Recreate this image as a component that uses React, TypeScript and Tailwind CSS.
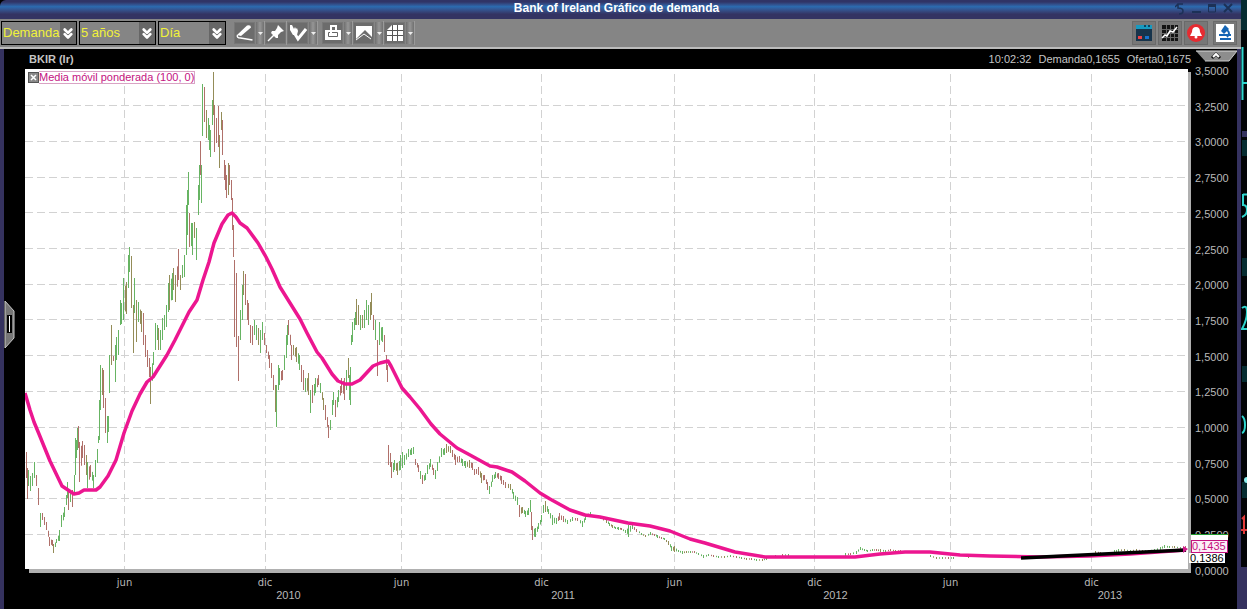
import { useState } from "react";
import { ChevronsDown } from "lucide-react";

type Tone = "g" | "r" | "o";
type Bar = [x: number, high: number, low: number, tone: Tone];

const TONES: Record<Tone, string> = { g: "#67b463", r: "#b0706a", o: "#948c58" };

const BARS: Bar[] = [
  [26, 452, 478, "r"], [27, 468, 499, "r"], [28, 470, 486, "g"], [30, 476, 491, "g"], [32, 473, 486, "g"], [34, 462, 478, "g"],
  [36, 475, 486, "r"], [38, 488, 505, "r"], [40, 513, 527, "g"], [42, 513, 520, "r"], [44, 517, 525, "r"], [46, 522, 530, "r"],
  [49, 537, 546, "r"], [52, 540, 546, "r"], [53, 544, 553, "o"], [56, 539, 543, "g"], [59, 530, 541, "g"], [61, 515, 527, "g"],
  [64, 507, 517, "g"], [66, 495, 505, "g"], [67, 482, 498, "g"], [68, 492, 510, "r"], [70, 490, 502, "g"], [72, 490, 507, "r"],
  [74, 475, 495, "g"], [75, 438, 475, "g"], [76, 440, 458, "g"], [77, 428, 450, "g"], [78, 426, 448, "r"], [79, 442, 482, "r"],
  [82, 441, 458, "r"], [84, 445, 465, "r"], [86, 455, 475, "o"], [87, 462, 488, "g"], [90, 465, 477, "r"], [93, 475, 488, "g"],
  [95, 460, 477, "g"], [97, 449, 463, "g"], [98, 436, 443, "g"], [99, 400, 440, "g"], [100, 365, 410, "g"], [102, 368, 395, "o"],
  [103, 370, 408, "r"], [105, 398, 433, "r"], [107, 416, 443, "g"], [108, 416, 432, "g"], [109, 355, 393, "g"], [111, 325, 365, "o"],
  [113, 356, 361, "r"], [115, 345, 382, "g"], [116, 337, 360, "g"], [118, 330, 355, "g"], [120, 300, 325, "g"], [121, 303, 324, "g"],
  [123, 278, 320, "g"], [126, 282, 314, "o"], [128, 255, 288, "g"], [129, 247, 272, "g"], [131, 256, 308, "o"], [133, 305, 353, "o"],
  [134, 278, 313, "g"], [136, 300, 342, "o"], [138, 302, 322, "g"], [141, 311, 332, "o"], [143, 313, 345, "r"], [145, 335, 357, "r"],
  [147, 350, 367, "r"], [149, 358, 377, "r"], [150, 367, 404, "o"], [153, 352, 365, "g"], [155, 323, 350, "g"], [157, 325, 340, "g"],
  [158, 328, 350, "o"], [160, 330, 350, "g"], [162, 318, 340, "g"], [164, 315, 330, "g"], [166, 305, 327, "g"], [168, 283, 312, "g"],
  [169, 275, 310, "o"], [172, 273, 300, "g"], [173, 268, 290, "o"], [175, 275, 302, "o"], [178, 249, 280, "r"], [180, 275, 290, "o"],
  [182, 265, 278, "g"], [184, 255, 277, "g"], [186, 205, 255, "g"], [187, 190, 235, "g"], [188, 172, 205, "g"], [189, 213, 247, "r"],
  [192, 223, 255, "g"], [194, 222, 238, "o"], [196, 228, 260, "g"], [198, 185, 215, "g"], [199, 165, 200, "g"], [200, 141, 175, "r"],
  [201, 165, 203, "g"], [202, 84, 136, "g"], [204, 87, 122, "r"], [206, 110, 138, "o"], [208, 118, 140, "g"], [209, 125, 150, "g"],
  [210, 130, 157, "g"], [212, 100, 125, "g"], [213, 72, 115, "o"], [214, 105, 152, "r"], [216, 118, 143, "r"], [218, 106, 147, "r"],
  [219, 135, 168, "o"], [221, 112, 130, "o"], [222, 120, 155, "r"], [224, 160, 180, "r"], [225, 165, 190, "r"], [226, 175, 198, "r"],
  [228, 163, 195, "o"], [229, 165, 185, "r"], [231, 180, 200, "r"], [232, 198, 230, "r"], [233, 225, 257, "r"], [234, 260, 337, "r"],
  [236, 273, 347, "r"], [238, 336, 381, "r"], [240, 310, 340, "g"], [242, 285, 320, "g"], [243, 271, 295, "o"], [245, 274, 305, "r"],
  [247, 300, 320, "r"], [248, 303, 325, "r"], [250, 325, 343, "r"], [252, 326, 345, "r"], [254, 320, 335, "g"], [256, 325, 340, "g"],
  [258, 328, 345, "o"], [260, 330, 353, "g"], [262, 322, 340, "g"], [264, 333, 345, "r"], [266, 345, 353, "r"], [269, 355, 368, "r"],
  [271, 363, 378, "r"], [273, 375, 390, "r"], [275, 385, 412, "o"], [276, 385, 427, "g"], [278, 365, 390, "g"], [279, 368, 385, "g"],
  [282, 370, 380, "r"], [284, 355, 370, "g"], [286, 335, 358, "g"], [287, 325, 345, "g"], [288, 320, 335, "r"], [291, 345, 360, "r"],
  [293, 345, 355, "o"], [296, 347, 362, "o"], [299, 355, 370, "g"], [301, 365, 382, "r"], [303, 370, 390, "r"], [305, 378, 392, "g"],
  [308, 373, 395, "o"], [310, 390, 413, "g"], [312, 385, 403, "r"], [315, 378, 393, "g"], [318, 375, 385, "r"], [320, 383, 393, "g"],
  [323, 398, 410, "o"], [325, 405, 420, "r"], [328, 425, 438, "r"], [330, 420, 430, "g"], [332, 400, 415, "g"], [333, 392, 405, "g"],
  [335, 400, 417, "r"], [338, 390, 402, "g"], [341, 378, 393, "r"], [344, 378, 400, "r"], [346, 370, 390, "g"], [348, 358, 378, "o"],
  [349, 375, 400, "g"], [350, 367, 405, "g"], [351, 335, 345, "g"], [352, 322, 342, "g"], [354, 318, 330, "g"], [355, 312, 325, "g"],
  [356, 299, 325, "o"], [358, 305, 325, "o"], [360, 315, 330, "g"], [362, 315, 328, "o"], [364, 310, 328, "g"], [366, 300, 320, "g"],
  [368, 305, 325, "g"], [370, 302, 320, "o"], [371, 293, 315, "o"], [373, 315, 330, "r"], [375, 320, 340, "g"], [377, 340, 376, "r"],
  [379, 322, 345, "g"], [382, 327, 342, "g"], [384, 335, 352, "r"], [386, 355, 370, "r"], [387, 365, 382, "r"],
];

// after the gap, thinner range
const TAIL: Bar[] = [
  [388, 445, 465, "r"], [390, 453, 467, "r"], [391, 462, 478, "r"], [394, 460, 470, "g"], [397, 463, 475, "o"], [400, 455, 470, "g"],
  [402, 452, 468, "g"], [404, 455, 465, "g"], [408, 449, 457, "g"], [411, 448, 455, "g"], [413, 447, 454, "g"], [415, 459, 465, "r"],
  [418, 465, 472, "r"], [420, 471, 479, "g"], [422, 475, 484, "r"], [425, 473, 480, "g"], [427, 465, 474, "g"], [430, 459, 467, "g"],
  [433, 468, 475, "r"], [435, 470, 479, "g"], [437, 462, 471, "g"], [441, 448, 457, "g"], [444, 448, 455, "g"], [446, 444, 453, "o"],
  [450, 446, 453, "o"], [452, 450, 457, "r"], [455, 455, 465, "r"], [459, 456, 462, "r"], [462, 459, 466, "g"], [465, 461, 468, "g"],
  [469, 460, 468, "o"], [472, 463, 470, "r"], [474, 469, 475, "r"], [478, 467, 475, "r"], [481, 473, 483, "o"], [484, 475, 480, "r"],
  [487, 482, 490, "r"], [489, 486, 494, "g"], [492, 475, 482, "g"], [495, 472, 478, "g"], [498, 473, 479, "r"], [501, 476, 484, "r"],
  [505, 482, 488, "r"], [510, 484, 490, "o"], [513, 492, 499, "g"], [517, 497, 505, "g"], [519, 505, 517, "r"], [522, 507, 513, "o"],
  [525, 511, 517, "g"], [528, 508, 515, "g"], [530, 500, 512, "g"], [531, 512, 530, "r"], [532, 526, 540, "r"], [535, 528, 537, "g"],
  [538, 523, 529, "g"], [541, 515, 522, "g"], [543, 505, 513, "g"], [545, 501, 512, "o"], [548, 509, 514, "g"], [552, 515, 525, "g"],
  [556, 518, 524, "g"], [559, 513, 520, "r"], [563, 516, 522, "r"], [567, 520, 524, "g"], [572, 517, 521, "g"], [577, 518, 521, "r"],
  [582, 521, 527, "g"], [585, 514, 520, "g"], [590, 512, 515, "g"], [600, 516, 519, "g"], [606, 519, 523, "o"], [609, 523, 526, "g"],
  [612, 525, 528, "o"], [615, 527, 529, "g"], [618, 527, 530, "g"], [621, 528, 530, "r"], [625, 530, 533, "g"], [628, 525, 537, "g"],
  [632, 524, 529, "g"], [636, 529, 532, "r"], [641, 533, 535, "g"], [645, 535, 537, "o"], [650, 532, 535, "g"], [654, 534, 536, "r"],
  [657, 535, 538, "g"], [661, 537, 539, "r"], [664, 538, 540, "g"], [668, 541, 545, "o"], [671, 546, 551, "g"], [674, 546, 552, "o"],
  [678, 550, 552, "g"], [682, 551, 554, "g"], [686, 551, 553, "o"], [690, 551, 553, "g"], [694, 551, 553, "r"], [698, 553, 555, "g"],
  [703, 555, 558, "g"], [708, 554, 556, "g"], [713, 555, 557, "r"], [718, 556, 558, "g"], [724, 556, 558, "o"], [730, 555, 557, "g"],
  [736, 556, 558, "r"], [741, 557, 559, "g"], [746, 558, 560, "o"], [751, 558, 560, "r"], [756, 559, 561, "g"], [762, 559, 561, "o"],
  [766, 558, 560, "g"], [775, 555, 557, "g"], [782, 554, 556, "r"], [788, 554, 556, "g"], [845, 553, 556, "g"], [850, 553, 555, "r"],
  [856, 551, 554, "g"], [860, 547, 550, "g"], [864, 549, 551, "g"], [867, 550, 552, "g"], [872, 549, 551, "g"], [876, 549, 551, "r"],
  [880, 549, 552, "o"], [885, 550, 552, "g"], [890, 549, 551, "r"], [895, 550, 552, "o"], [900, 550, 552, "r"], [930, 555, 557, "g"],
  [936, 557, 559, "o"], [942, 557, 559, "g"], [948, 557, 559, "r"], [953, 557, 559, "g"], [968, 556, 558, "o"], [1095, 551, 553, "o"],
  [1100, 552, 554, "r"], [1114, 550, 553, "g"], [1118, 549, 552, "g"], [1124, 549, 551, "o"], [1130, 550, 552, "g"], [1136, 549, 551, "o"],
  [1142, 550, 552, "r"], [1148, 550, 552, "o"], [1154, 549, 551, "g"], [1160, 547, 550, "g"], [1164, 545, 548, "g"], [1169, 546, 548, "g"],
  [1174, 546, 548, "o"], [1180, 547, 549, "g"], [1185, 546, 549, "r"],
];

// adds one shorter session between close neighbours
function fill(bars: Bar[]): Bar[] {
  return bars.flatMap((b, i) => {
    const n = bars[i + 1];
    if (!n || n[0] - b[0] < 3 || n[0] - b[0] > 6) return [b];
    const hi = (b[1] + n[1]) / 2;
    const lo = (b[2] + n[2]) / 2;
    const pad = (lo - hi) * 0.15;
    return [b, [b[0] + Math.ceil((n[0] - b[0]) / 2), hi + pad, lo - pad, n[3]] as Bar];
  });
}

const SESSIONS = [...fill(BARS), ...fill(TAIL)];

function barPath(tone: Tone) {
  return SESSIONS.filter((b) => b[3] === tone)
    .map(([x, hi, lo]) => `M${x + 0.5} ${hi}V${lo}`)
    .join("");
}

const AVERAGE =
  "25,393 30,410 34,422 39,434 50,461 62,486 68,490 74,494 79,493 84,490 96,490 100,487 108,476 116,460 124,433 132,411 140,394 147,382 153,377 167,355 175,340 185,320 189,312 197,300 203,280 209,262 214,243 222,224 228,215 232,213 236,217 240,223 247,228 258,243 266,257 272,269 280,287 290,303 300,319 307,333 317,352 322,358 332,374 338,381 345,384 352,384 360,380 373,366 380,363 388,361 391,366 402,388 410,397 420,409 431,424 440,434 457,448 470,455 490,466 497,467 512,472 525,481 540,493 550,499 570,510 585,515 600,517 628,523 650,526 670,531 690,539 705,543 735,552 765,557 855,557 880,554 905,552 930,552 960,555 990,556 1040,557 1090,556 1130,554 1186,550";

const H_LINES = [105, 141, 177, 212, 248, 284, 319, 355, 391, 427, 462, 498, 534];
const V_LINES = [124, 265, 401, 541, 674, 814, 950, 1091];

const PRICES = [
  "3,5000", "3,2500", "3,0000", "2,7500", "2,5000", "2,2500", "2,0000", "1,7500",
  "1,5000", "1,2500", "1,0000", "0,7500", "0,5000", "0,2500", "0,0000",
];
const MONTHS = ["jun", "dic", "jun", "dic", "jun", "dic", "jun", "dic"];
const YEARS = ["2010", "2011", "2012", "2013"];

function Picker({ label, options, width }: { label: string; options: string[]; width: string }) {
  const [value, setValue] = useState(options[0]);
  return (
    <div className={`relative h-6 border border-black bg-[#858585] ${width}`}>
      <select
        aria-label={label}
        value={value}
        onChange={(e) => setValue(e.target.value)}
        className="block h-full w-full appearance-none pl-px text-[13px] leading-5 text-[#f2f23a] outline-none"
      >
        {options.map((o) => (
          <option key={o}>{o}</option>
        ))}
      </select>
      <span className="pointer-events-none absolute inset-y-0 right-0 flex w-4 items-center justify-center bg-[#666]">
        <ChevronsDown size={17} strokeWidth={4} color="#fff" />
      </span>
    </div>
  );
}

function Tool({ label, menu = true, children }: { label: string; menu?: boolean; children: React.ReactNode }) {
  return (
    <div className="flex h-6 items-center gap-px border-r border-[#9a9a9a]">
      <button aria-label={label} className="flex h-[22px] w-[21px] items-center justify-center border border-[#777] bg-[#6c6c6c]">
        <svg width="18" height="18" viewBox="0 0 18 18">{children}</svg>
      </button>
      {menu && (
        <button aria-label={`${label}: opciones`} className="flex h-[22px] w-2 items-center justify-center bg-linear-to-r from-[#707070] via-[#969696] to-[#707070]">
          <svg width="5" height="3" viewBox="0 0 5 3"><path d="M0 0h5L2.5 3z" fill="#eee" /></svg>
        </button>
      )}
    </div>
  );
}

function PanelButton({ label, children }: { label: string; children: React.ReactNode }) {
  return (
    <button aria-label={label} className="flex size-6 items-center justify-center border border-[#6a6a6a] bg-[#777]">
      <svg width="18" height="18" viewBox="0 0 18 18">{children}</svg>
    </button>
  );
}

function TitleBar() {
  return (
    <header className="flex h-[19px] shrink-0 items-start rounded-tl-md bg-linear-to-b from-[#303466] from-10% via-[#2b6bb0] via-35% to-[#333362] to-75%">
      <div className="w-14" />
      <h1 className="flex-1 text-center text-[12px] leading-4 font-bold text-white">Bank of Ireland Gráfico de demanda</h1>
      <div className="flex w-16 justify-end gap-1.5 pt-[3px] pr-2">
        <button aria-label="Desacoplar">
          <svg width="10" height="12" viewBox="0 0 10 12"><path d="M8 1H3v4q5 0 5 3T4 11M3 1L0 4" fill="none" stroke="#1c3157" strokeWidth="1.5" /></svg>
        </button>
        <button aria-label="Minimizar">
          <svg width="10" height="12" viewBox="0 0 10 12"><path d="M1 9h9" stroke="#1c3157" strokeWidth="2" /></svg>
        </button>
        <button aria-label="Maximizar">
          <svg width="10" height="12" viewBox="0 0 10 12"><path d="M1 1h8v3H1z" fill="#1c3157" /><path d="M1.500 2v7h7V2" fill="none" stroke="#1c3157" /></svg>
        </button>
        <button aria-label="Cerrar">
          <svg width="10" height="12" viewBox="0 0 10 12"><path d="M1 1l8 8M9 1l-8 8" stroke="#1c3157" strokeWidth="2" /></svg>
        </button>
      </div>
    </header>
  );
}

function Toolbar() {
  return (
    <div className="flex h-[30px] shrink-0 items-center justify-between border-b-2 border-[#bcbcbc] bg-[#858585] pr-1 pl-px">
      <div className="flex items-center gap-[2px]">
        <Picker label="Precio" options={["Demanda", "Oferta"]} width="w-[76px]" />
        <Picker label="Periodo" options={["5 años", "1 año"]} width="w-[77px]" />
        <Picker label="Intervalo" options={["Día", "Semana"]} width="w-[68px]" />
        <div className="ml-1.5 flex items-center">
          <Tool label="Dibujar">
            <path d="M1 11L11 1.500q4-1 4 2L5 12z" fill="#fff" />
            <path d="M1.500 11q-1 3 3 3l12 2" fill="none" stroke="#fff" strokeWidth="1.5" />
          </Tool>
          <Tool label="Fijar" menu={false}>
            <path d="M11 1l6 6-3 1-3 3 0 3-2 0-5-5 1-2 3 0 2-3z" fill="#fff" />
            <path d="M7 11l-6 6" stroke="#fff" strokeWidth="1.5" />
          </Tool>
          <Tool label="Seleccionar">
            <path d="M1 1l2 0 2 4 1-2 1 2 1-1 1 3-1 4-4 0-3-5z" fill="#fff" />
            <path d="M6 10l3 5 8-10" fill="none" stroke="#fff" strokeWidth="3" />
          </Tool>
          <div className="w-1" />
          <Tool label="Herramientas">
            <path d="M1 6h16v10H1z" fill="#fff" />
            <path d="M7 6V2h5v4" fill="none" stroke="#fff" strokeWidth="2" />
            <path d="M6 8.500h-1.500v4h9v-4H8" fill="none" stroke="#666" />
          </Tool>
          <Tool label="Tipo de gráfico">
            <path d="M1 2h16v11l-7-7-9 9z" fill="#fff" />
            <path d="M1 16l8-6 7 5" fill="none" stroke="#fff" />
          </Tool>
          <Tool label="Cuadrícula">
            <path d="M6 1h11v16H1V6z" fill="#fff" />
            <path d="M1 6.500h16M1 11.500h16M6.500 1v16M11.500 1v16" stroke="#555" />
          </Tool>
        </div>
      </div>
      <div className="flex items-center gap-[2px]">
        <PanelButton label="Panel">
          <path d="M1 1h16v16H1z" fill="#17344c" />
          <path d="M1 1h16v4H1z" fill="#189ac0" />
          <path d="M9 2h2M13 2h2" stroke="#0a4463" strokeWidth="2" />
          <path d="M3 12h4v3H3z" fill="#ee4145" />
          <path d="M10 12h4v3h-4z" fill="#1673cf" />
        </PanelButton>
        <PanelButton label="Gráfico">
          <path d="M1 1h16v16H1z" fill="#141414" />
          <path d="M1 5.500h16M1 9.500h16M1 13.500h16M5.500 1v16M9.500 1v16M13.500 1v16" stroke="#666" />
          <path d="M1 14l3-3 2 1 3-5 3 1 4-5" fill="none" stroke="#fff" strokeWidth="1.5" />
        </PanelButton>
        <PanelButton label="Alertas">
          <circle cx="9" cy="9" r="9" fill="#e52b31" />
          <path d="M9 3q4 0 4 5l2 4H3l2-4q0-5 4-5z" fill="#fff" />
          <circle cx="9" cy="13" r="1.500" fill="#fff" />
        </PanelButton>
        <div className="w-px" />
        <PanelButton label="Análisis">
          <path d="M0 0h18v18H0z" fill="#fff" />
          <path d="M9 1l4 4-5 5-3-3z" fill="#1565b5" />
          <path d="M3 11h12M11 6q4 3 0 7M4 15h11" fill="none" stroke="#1565b5" strokeWidth="2" />
        </PanelButton>
      </div>
    </div>
  );
}

function Plot() {
  const [average, setAverage] = useState(true);
  return (
    <div className="relative flex min-h-0 flex-1 bg-white">
      <svg className="h-full w-full" viewBox="25 69 1163 500" preserveAspectRatio="none">
        <g stroke="#d2d2d2" strokeDasharray="8 4">
          {H_LINES.map((y) => <path key={y} d={`M25 ${y + 0.5}H1188`} />)}
          {V_LINES.map((x) => <path key={x} d={`M${x + 0.5} 74V569`} />)}
        </g>
        {(["g", "r", "o"] as const).map((t) => (
          <path key={t} d={barPath(t)} stroke={TONES[t]} />
        ))}
        {average && <polyline points={AVERAGE} fill="none" stroke="#ec1690" strokeWidth="3.500" strokeLinejoin="round" />}
        <path d="M1021 558L1186 550" stroke="#000" strokeWidth="3.500" />
        <path d="M1183 546l5 3-5 4z" fill="#d0188a" />
      </svg>
      <div className="absolute top-[2px] left-[3px] flex h-[13px] items-center">
        <button aria-label="Quitar media" onClick={() => setAverage(!average)} className="flex size-[11px] items-center justify-center border border-[#555] bg-[#888]">
          <svg width="7" height="7" viewBox="0 0 7 7"><path d="M1 1l5 5M6 1L1 6" stroke="#fff" strokeWidth="1.500" /></svg>
        </button>
        <span className="border border-l-0 border-[#d9a3c4] text-[11px] leading-[11px] whitespace-nowrap text-[#c4127f]">
          Media móvil ponderada (100, 0)
        </span>
      </div>
    </div>
  );
}

function PriceAxis() {
  return (
    <div className="flex w-[46px] shrink-0 flex-col pb-8">
      <button aria-label="Contraer" className="h-4 pl-[5px]">
        <svg className="block" width="41" height="16" viewBox="0 0 41 16">
          <path d="M0 2h41l-8 10H9z" fill="#8d8d8d" />
          <path d="M0 2h41" stroke="#ddd" />
          <path d="M9 12h24l8-10" fill="none" stroke="#c8c8c8" />
          <path d="M16 9l4-4 4 4" fill="none" stroke="#111" strokeWidth="3" />
          <path d="M17 8l3-3 3 3" fill="none" stroke="#fff" strokeWidth="2" />
        </svg>
      </button>
      <div className="relative flex flex-1 flex-col justify-between pl-1 text-[11px] leading-3 text-[#b9b9b9]">
        {PRICES.map((p) => <span key={p}>{p}</span>)}
        <div className="absolute bottom-3.5 left-[-2px] w-9 bg-white pl-px leading-[10px] text-black">0,1386</div>
        <div className="absolute bottom-6 left-0 w-[37px] border-t border-[#1f9a2c] bg-white pt-[5px]">
          <div className="border border-[#c4127f] bg-[#fdeef7] leading-[11px] text-[#c4127f]">0,1435</div>
        </div>
      </div>
    </div>
  );
}

// the strip of the window behind this one
function Backdrop() {
  return (
    <svg className="h-full w-[6px] shrink-0 bg-[#020406]" viewBox="0 0 6 609" preserveAspectRatio="none">
      <path d="M0 0h6v30H0zM1 140h5v16H1zM1 258h5v18H1zM1 366h5v16H1zM1 482h5v16H1z" fill="#062c31" />
      <path d="M1.500 47v53M2 83h4M2 194.500h4M2 194v11q4 0 4 5t-5 7M1 308q5-4 5 4t-5 17h5M1 416q3 2 3 9t-3 8" fill="none" stroke="#30d5cf" strokeWidth="2" />
      <circle cx="6" cy="480" r="3" fill="#8df0f0" />
      <path d="M1 131h5v6H1zM0 567h6v42H0z" fill="#35325f" />
      <path d="M1 519l2-2v17M0 530h6" fill="none" stroke="#e23a3a" strokeWidth="2" />
    </svg>
  );
}

export default function App() {
  return (
    <div className="flex h-screen min-h-96 overflow-hidden bg-black font-['Liberation_Sans',Arial,sans-serif]">
      <main className="flex min-w-0 flex-1 flex-col">
        <TitleBar />
        <Toolbar />
        <div className="flex min-h-0 flex-1 border-r-4 border-l-4 border-[#35325f] bg-black">
          <div className="flex w-[21px] shrink-0 items-center">
            <button aria-label="Mostrar panel" className="pb-2">
              <svg className="block" width="11" height="48" viewBox="0 0 11 48">
                <path d="M1 0l9 10v27L1 47z" fill="#777" stroke="#c8c8c8" />
                <path d="M3 14h5v18H3z" fill="#000" />
                <path d="M5.500 15v16" stroke="#fff" />
              </svg>
            </button>
          </div>
          <section className="flex min-w-0 flex-1 flex-col">
            <div className="flex h-5 shrink-0 items-center justify-between pl-1 text-[11px] text-[#c4c4c4]">
              <h2 className="font-bold">BKIR (Ir)</h2>
              <div className="flex gap-[7px]">
                <span>10:02:32</span>
                <span>Demanda0,1655</span>
                <span>Oferta0,1675</span>
              </div>
            </div>
            <div className="flex min-h-0 flex-1">
              <Plot />
              <div className="mt-[3px] w-[3px] shrink-0 bg-[#b0b0b0]" />
            </div>
            <div className="ml-1 h-1 shrink-0 bg-[#b0b0b0]" />
            <div className="mr-[3px] h-9 shrink-0 pt-1 text-center text-[11px] leading-3 text-[#b9b9b9]">
              <div className="grid grid-cols-[30fr_139fr_142fr_131fr_149fr_117fr_163fr_109fr_173fr_10fr] font-['DejaVu_Sans',sans-serif] text-[10px]">
                <span />
                {MONTHS.map((m, i) => <span key={i}>{m}</span>)}
              </div>
              <div className="grid grid-cols-[61fr_405fr_144fr_401fr_148fr_4fr]">
                <span />
                {YEARS.map((y) => <span key={y}>{y}</span>)}
              </div>
            </div>
          </section>
          <PriceAxis />
        </div>
      </main>
      <Backdrop />
    </div>
  );
}
